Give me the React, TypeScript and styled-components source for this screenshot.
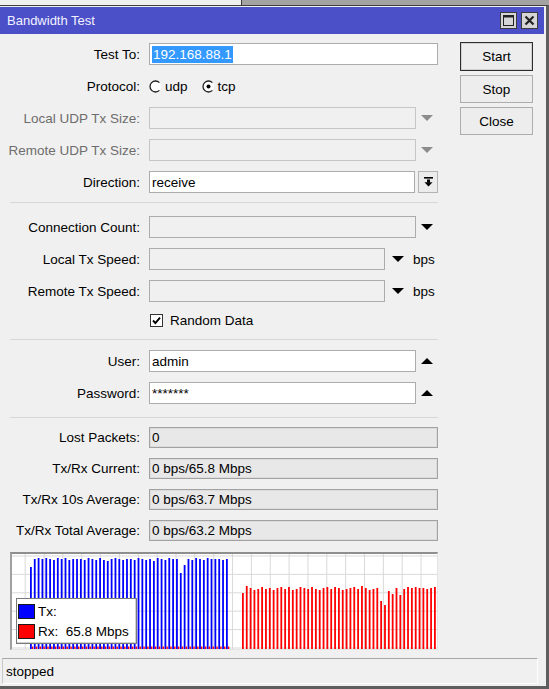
import styled, { createGlobalStyle } from "styled-components";

const GlobalStyle = createGlobalStyle`
  html, body {
    margin: 0;
    padding: 0;
    background: #f0f0f0;
  }
  body {
    font-family: "Liberation Sans", Arial, sans-serif;
    font-size: 13.5px;
    color: #000;
  }
  * {
    box-sizing: border-box;
  }
`;

const blueTops = [
  13, 5, 4, 5, 4, 5, 6, 4, 5, 4, 6, 5, 5, 5, 6, 4, 5, 6, 4, 6, 7, 5, 4, 5, 6, 5,
  5, 6, 4, 5, 6, 5, 7, 4, 5, 6, 4, 5, 5, 19, 11, 5, 6, 4, 5, 6, 4, 5, 5, 5, 6, 5,
];

const redTops = [
  39, 32, 34, 36, 35, 33, 35, 34, 36, 34, 33, 35, 33, 36, 35, 33, 34, 35, 33, 35,
  36, 34, 33, 35, 33, 34, 36, 35, 34, 33, 35, 32, 34, 36, 35, 34, 47, 51, 37, 40,
  34, 41, 35, 33, 34, 33, 34, 34, 35, 34, 33,
];

const CHART_W = 425;
const CHART_H = 95;

const DownArrow = ({ color = "#000" }: { color?: string }) => (
  <svg width="12" height="6" viewBox="0 0 12 6">
    <path d="M0 0H12L6 6Z" fill={color} />
  </svg>
);

const UpArrow = () => (
  <svg width="12" height="6" viewBox="0 0 12 6">
    <path d="M0 6H12L6 0Z" fill="#000" />
  </svg>
);

const DropToBar = () => (
  <svg width="9" height="10" viewBox="0 0 9 10">
    <rect x="0" y="0" width="9" height="1.6" fill="#000" />
    <rect x="3" y="2.5" width="3" height="3" fill="#000" />
    <path d="M0.5 5.2H8.5L4.5 9.6Z" fill="#000" />
  </svg>
);

const Radio = ({ checked }: { checked?: boolean }) => (
  <svg width="13" height="13" viewBox="0 0 13 13">
    <circle cx="6.5" cy="6.5" r="5.5" fill="#fff" />
    <path
      d="M10.4 2.6 A5.5 5.5 0 1 0 10.4 10.4"
      fill="none"
      stroke="#1e1e1e"
      strokeWidth="1.3"
    />
    {checked && <circle cx="6.5" cy="6.5" r="2" fill="#000" />}
  </svg>
);

const CheckBox = () => (
  <svg width="13" height="13" viewBox="0 0 13 13">
    <rect x="0.5" y="0.5" width="12" height="12" fill="#fff" stroke="#333" />
    <path
      d="M3 6.5 L5.4 9 L10 3.6"
      fill="none"
      stroke="#000"
      strokeWidth="1.9"
    />
  </svg>
);

const MaximizeIcon = () => (
  <svg width="17" height="17" viewBox="0 0 17 17">
    <rect x="0.5" y="0.5" width="16" height="16" fill="#d6d6d6" stroke="#3c3c3c" />
    <rect x="3.5" y="3.5" width="10" height="10" fill="none" stroke="#222" />
    <rect x="3.5" y="3.5" width="10" height="2" fill="#222" />
  </svg>
);

const CloseIcon = () => (
  <svg width="17" height="17" viewBox="0 0 17 17">
    <rect x="0.5" y="0.5" width="16" height="16" fill="#d6d6d6" stroke="#3c3c3c" />
    <path d="M4.5 4.5 L12.5 12.5 M12.5 4.5 L4.5 12.5" stroke="#222" strokeWidth="2.2" />
  </svg>
);

const TrafficGraph = () => {
  const vLines: number[] = [];
  for (let x = 13.2; x < CHART_W; x += 18.85) vLines.push(x);
  const hLines: number[] = [];
  for (let y = 2; y < CHART_H; y += 18.4) hLines.push(y);

  return (
    <svg width={CHART_W} height={CHART_H} viewBox={`0 0 ${CHART_W} ${CHART_H}`}>
      {vLines.map((x) => (
        <line key={"v" + x} x1={x} x2={x} y1={0} y2={CHART_H} stroke="#d9d9d9" />
      ))}
      {hLines.map((y) => (
        <line key={"h" + y} x1={0} x2={CHART_W} y1={y} y2={y} stroke="#d9d9d9" />
      ))}
      {blueTops.map((t, i) => (
        <rect key={"b" + i} x={18 + i * 3.843} y={t} width={1.8} height={CHART_H - t} fill="#0000ff" />
      ))}
      {blueTops.map((_, i) => (
        <rect key={"rb" + i} x={19.9 + i * 3.843} y={CHART_H - 2.5} width={1.4} height={2.5} fill="#ff0000" />
      ))}
      {redTops.map((t, i) => (
        <rect key={"r" + i} x={230 + i * 3.84} y={t} width={1.8} height={CHART_H - t} fill="#ff0000" />
      ))}
    </svg>
  );
};

export default function App() {
  return (
    <>
      <GlobalStyle />
      <Backdrop>
        <BackPane />
        <BackDesk />
      </Backdrop>
      <Window>
        <TitleBar>
          <Title>Bandwidth Test</Title>
          <TitleButtons>
            <MaximizeIcon />
            <CloseIcon />
          </TitleButtons>
        </TitleBar>
        <Body>
          <Main>
            <Section $pt={9} $pb={9}>
              <Row>
                <Label>Test To:</Label>
                <TextBox>
                  <Selected>192.168.88.1</Selected>
                </TextBox>
              </Row>
              <Row>
                <Label>Protocol:</Label>
                <RadioItem>
                  <Radio />
                  udp
                </RadioItem>
                <RadioItem>
                  <Radio checked />
                  tcp
                </RadioItem>
              </Row>
              <Row>
                <Label $disabled>Local UDP Tx Size:</Label>
                <TextBox $w={267} $variant="disabled" />
                <ArrowSlot $w={22}>
                  <DownArrow color="#8c8c8c" />
                </ArrowSlot>
              </Row>
              <Row>
                <Label $disabled>Remote UDP Tx Size:</Label>
                <TextBox $w={267} $variant="disabled" />
                <ArrowSlot $w={22}>
                  <DownArrow color="#8c8c8c" />
                </ArrowSlot>
              </Row>
              <Row>
                <Label>Direction:</Label>
                <TextBox $w={266}>receive</TextBox>
                <SmallButton>
                  <DropToBar />
                </SmallButton>
              </Row>
            </Section>

            <Section $divider $pt={13} $pb={11}>
              <Row>
                <Label>Connection Count:</Label>
                <TextBox $w={267} $variant="empty" />
                <ArrowSlot $w={22}>
                  <DownArrow />
                </ArrowSlot>
              </Row>
              <Row>
                <Label>Local Tx Speed:</Label>
                <TextBox $w={236} $variant="empty" />
                <ArrowSlot $w={26}>
                  <DownArrow />
                </ArrowSlot>
                <Unit>bps</Unit>
              </Row>
              <Row>
                <Label>Remote Tx Speed:</Label>
                <TextBox $w={236} $variant="empty" />
                <ArrowSlot $w={26}>
                  <DownArrow />
                </ArrowSlot>
                <Unit>bps</Unit>
              </Row>
              <Row $h={16}>
                <Label />
                <CheckItem>
                  <CheckBox />
                  Random Data
                </CheckItem>
              </Row>
            </Section>

            <Section $divider $pt={10} $pb={13}>
              <Row>
                <Label>User:</Label>
                <TextBox $w={267}>admin</TextBox>
                <ArrowSlot $w={22}>
                  <UpArrow />
                </ArrowSlot>
              </Row>
              <Row>
                <Label>Password:</Label>
                <TextBox $w={267}>*******</TextBox>
                <ArrowSlot $w={22}>
                  <UpArrow />
                </ArrowSlot>
              </Row>
            </Section>

            <Section $divider $pt={9} $pb={0} $gap={10}>
              <Row $h={21}>
                <Label>Lost Packets:</Label>
                <TextBox $variant="readonly">0</TextBox>
              </Row>
              <Row $h={21}>
                <Label>Tx/Rx Current:</Label>
                <TextBox $variant="readonly">0 bps/65.8 Mbps</TextBox>
              </Row>
              <Row $h={21}>
                <Label>Tx/Rx 10s Average:</Label>
                <TextBox $variant="readonly">0 bps/63.7 Mbps</TextBox>
              </Row>
              <Row $h={21}>
                <Label>Tx/Rx Total Average:</Label>
                <TextBox $variant="readonly">0 bps/63.2 Mbps</TextBox>
              </Row>
            </Section>

            <Chart>
              <TrafficGraph />
              <Legend>
                <LegendRow>
                  <Swatch $color="#0000ff" />
                  Tx:
                </LegendRow>
                <LegendRow>
                  <Swatch $color="#ff0000" />
                  Rx:&nbsp;&nbsp;65.8 Mbps
                </LegendRow>
              </Legend>
            </Chart>
          </Main>

          <Actions>
            <PushButton $default>Start</PushButton>
            <PushButton>Stop</PushButton>
            <PushButton>Close</PushButton>
          </Actions>
        </Body>
        <StatusBar>stopped</StatusBar>
      </Window>
    </>
  );
}

const Backdrop = styled.div`
  display: flex;
  height: 5px;
`;

const BackPane = styled.div`
  width: 242px;
  background: #f0f0f0;
  border-right: 1px solid #3a3a3a;
`;

const BackDesk = styled.div`
  flex: 1;
  background: #a3a3a3;
`;

const Window = styled.div`
  width: 549px;
  background: #f0f0f0;
  border-top: 1px solid #404040;
  border-right: 3px solid #5e5e5e;
  border-bottom: 3px solid #5e5e5e;
  padding: 1px 2px 2px 0;
`;

const TitleBar = styled.div`
  height: 27px;
  background: #4b4fc8;
  display: flex;
  align-items: center;
  justify-content: space-between;
  padding: 0 6px 0 7px;
`;

const Title = styled.span`
  color: #f2f2ff;
  font-size: 13px;
`;

const TitleButtons = styled.div`
  display: flex;
  gap: 4px;
  svg {
    display: block;
  }
`;

const Body = styled.div`
  display: flex;
`;

const Main = styled.div`
  width: 438px;
  padding-left: 10px;
  display: flex;
  flex-direction: column;
`;

const Section = styled.div<{ $divider?: boolean; $pt: number; $pb: number; $gap?: number }>`
  display: flex;
  flex-direction: column;
  gap: ${({ $gap }) => $gap ?? 10}px;
  padding-top: ${({ $pt }) => $pt}px;
  padding-bottom: ${({ $pb }) => $pb}px;
  border-top: ${({ $divider }) => ($divider ? "1px solid #d7d7d7" : "none")};
`;

const Row = styled.div<{ $h?: number }>`
  display: flex;
  align-items: center;
  height: ${({ $h }) => $h ?? 22}px;
`;

const Label = styled.div<{ $disabled?: boolean }>`
  flex: 0 0 139px;
  min-width: 0;
  padding-right: 9px;
  display: flex;
  justify-content: flex-end;
  white-space: nowrap;
  color: ${({ $disabled }) => ($disabled ? "#6d6d6d" : "#000")};
`;

const variants = {
  normal: "background: #fff; border: 1px solid #acacac;",
  empty: "background: #f0f0f0; border: 1px solid #acacac;",
  disabled: "background: #f0f0f0; border: 1px solid #c6c6c6;",
  readonly:
    "background: #e8e8e8; border: 1px solid #a2a2a2; box-shadow: inset 0 0 0 1px #dcdcdc;",
};

const TextBox = styled.div<{ $w?: number; $variant?: keyof typeof variants }>`
  ${({ $variant }) => variants[$variant ?? "normal"]}
  ${({ $w }) => ($w ? `width: ${$w}px; flex: 0 0 ${$w}px;` : "flex: 1;")}
  height: 100%;
  display: flex;
  align-items: center;
  padding-left: 2px;
  white-space: nowrap;
  overflow: hidden;
`;

const Selected = styled.span`
  background: #3399ff;
  color: #fff;
  line-height: 17px;
  padding: 0 1px;
`;

const ArrowSlot = styled.div<{ $w: number }>`
  width: ${({ $w }) => $w}px;
  flex: 0 0 ${({ $w }) => $w}px;
  display: flex;
  align-items: center;
  justify-content: center;
  svg {
    display: block;
  }
`;

const SmallButton = styled.div`
  margin-left: 3px;
  width: 21px;
  height: 22px;
  border: 1px solid #b4b4b4;
  background: #ececec;
  display: flex;
  align-items: center;
  justify-content: center;
`;

const Unit = styled.span`
  margin-left: 2px;
`;

const RadioItem = styled.label`
  display: flex;
  align-items: center;
  gap: 3px;
  margin-right: 14px;
  svg {
    display: block;
  }
`;

const CheckItem = styled.label`
  display: flex;
  align-items: center;
  gap: 7px;
  padding-left: 1px;
  svg {
    display: block;
  }
`;

const Chart = styled.div`
  position: relative;
  margin-top: 11px;
  width: 428px;
  height: 98px;
  background: #fff;
  border-top: 2px solid #8e8e8e;
  border-left: 2px solid #a0a0a0;
  border-right: 1px solid #e4e4e4;
  border-bottom: 1px solid #e4e4e4;
  svg {
    display: block;
  }
`;

const Legend = styled.div`
  position: absolute;
  left: 4px;
  top: 44px;
  width: 121px;
  height: 46px;
  background: #fff;
  border: 1px solid #7a7a7a;
  box-shadow: inset -1px -1px 0 #d0d0d0;
  display: flex;
  flex-direction: column;
  justify-content: center;
  gap: 5px;
  padding-left: 1px;
`;

const LegendRow = styled.div`
  display: flex;
  align-items: center;
  gap: 3px;
  height: 15px;
  white-space: nowrap;
`;

const Swatch = styled.span<{ $color: string }>`
  width: 17px;
  height: 15px;
  background: ${({ $color }) => $color};
  border: 1px solid #1a1a1a;
`;

const Actions = styled.div`
  margin-left: 22px;
  padding-top: 8px;
  width: 73px;
  display: flex;
  flex-direction: column;
  gap: 4px;
`;

const PushButton = styled.button<{ $default?: boolean }>`
  height: ${({ $default }) => ($default ? 29 : 28)}px;
  width: 73px;
  padding: 0;
  font-family: "Liberation Sans", Arial, sans-serif;
  font-size: 13.5px;
  color: #000;
  background: #ededed;
  border: 1px solid ${({ $default }) => ($default ? "#2e2e2e" : "#adadad")};
  box-shadow: ${({ $default }) => ($default ? "inset 0 0 0 1px #d0d0d0" : "none")};
`;

const StatusBar = styled.div`
  margin: 8px 6px 0 2px;
  height: 26px;
  display: flex;
  align-items: center;
  padding-left: 3px;
  border-top: 1px solid #a8a8a8;
  border-left: 1px solid #c8c8c8;
  border-bottom: 1px solid #fdfdfd;
  border-right: 1px solid #fdfdfd;
`;
